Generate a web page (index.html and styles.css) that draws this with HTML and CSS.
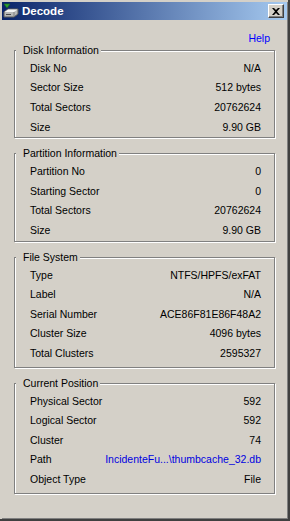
FILE: index.html
```html
<!DOCTYPE html>
<html lang="en">
<head>
    <meta charset="UTF-8">
    <title>Decode</title>
    <link rel="stylesheet" href="styles.css">
</head>
<body>
    <div class="window">
        <div class="frame">
            <div class="titlebar">
                <svg class="app-icon" width="16" height="16" viewBox="0 0 16 16">
                    <path d="M1 9 L5 6 H15 V11 L11 14 H1 Z" fill="#b8b8b8" stroke="#5a5a5a" stroke-width="1"/>
                    <path d="M1.5 9 L5 6.5 H14.5 L11 9 Z" fill="#f4f4f4"/>
                    <path d="M11 9 V13.5" stroke="#808080" stroke-width="1"/>
                    <rect x="3" y="11" width="5" height="1" fill="#4a4a4a"/>
                    <path d="M1 1 L7 1 L4 5 Z" fill="#2fa32f" stroke="#1d6b1d" stroke-width="0.6"/>
                </svg>
                <span class="title">Decode</span>
                <button class="close">
                    <svg width="8" height="7" viewBox="0 0 8 7">
                        <path d="M0 0 H2 L4 2 L6 0 H8 L5 3.5 L8 7 H6 L4 5 L2 7 H0 L3 3.5 Z" fill="#000"/>
                    </svg>
                </button>
            </div>

            <div class="content">
                <div class="help"><a href="#">Help</a></div>

                <fieldset class="group">
                    <legend>Disk Information</legend>
                    <div class="row"><span>Disk No</span><span>N/A</span></div>
                    <div class="row"><span>Sector Size</span><span>512 bytes</span></div>
                    <div class="row"><span>Total Sectors</span><span>20762624</span></div>
                    <div class="row"><span>Size</span><span>9.90 GB</span></div>
                </fieldset>

                <fieldset class="group">
                    <legend>Partition Information</legend>
                    <div class="row"><span>Partition No</span><span>0</span></div>
                    <div class="row"><span>Starting Sector</span><span>0</span></div>
                    <div class="row"><span>Total Sectors</span><span>20762624</span></div>
                    <div class="row"><span>Size</span><span>9.90 GB</span></div>
                </fieldset>

                <fieldset class="group loose">
                    <legend>File System</legend>
                    <div class="row"><span>Type</span><span>NTFS/HPFS/exFAT</span></div>
                    <div class="row"><span>Label</span><span>N/A</span></div>
                    <div class="row"><span>Serial Number</span><span>ACE86F81E86F48A2</span></div>
                    <div class="row"><span>Cluster Size</span><span>4096 bytes</span></div>
                    <div class="row"><span>Total Clusters</span><span>2595327</span></div>
                </fieldset>

                <fieldset class="group loose">
                    <legend>Current Position</legend>
                    <div class="row"><span>Physical Sector</span><span>592</span></div>
                    <div class="row"><span>Logical Sector</span><span>592</span></div>
                    <div class="row"><span>Cluster</span><span>74</span></div>
                    <div class="row"><span>Path</span><a class="path" href="#">IncidenteFu...\thumbcache_32.db</a></div>
                    <div class="row"><span>Object Type</span><span>File</span></div>
                </fieldset>
            </div>
        </div>
    </div>
</body>
</html>
```

FILE: styles.css
```css
html, body {
    margin: 0;
    padding: 0;
}
body {
    background-color: #d4d0c8;
    font-family: "Liberation Sans", Arial, sans-serif;
    font-size: 10.5px;
    color: #000;
}
.window {
    width: 290px;
    height: 521px;
    box-sizing: border-box;
    padding: 2px 0 0 2px;
    border-right: 2px solid #404040;
    border-bottom: 2px solid #404040;
}
.frame {
    height: 100%;
    box-sizing: border-box;
    border-right: 1px solid #808080;
    border-bottom: 1px solid #808080;
}
.titlebar {
    display: flex;
    align-items: center;
    height: 18px;
    padding: 0 3px 0 1px;
    background: linear-gradient(to right, #0a246a, #a6caf0);
}
.app-icon {
    display: block;
    margin-right: 3px;
}
.title {
    flex-grow: 1;
    color: #fff;
    font-weight: bold;
    font-size: 11.5px;
}
.close {
    display: flex;
    align-items: center;
    justify-content: center;
    width: 16px;
    height: 14px;
    box-sizing: border-box;
    padding: 0;
    background-color: #d4d0c8;
    border-top: 1px solid #fff;
    border-left: 1px solid #fff;
    border-right: 1px solid #404040;
    border-bottom: 1px solid #404040;
    box-shadow: inset -1px -1px 0 #808080;
}
.close svg {
    display: block;
}
.content {
    padding: 13px 12px 0;
}
.help {
    text-align: right;
    line-height: 11px;
    padding-right: 5px;
}
a {
    color: #0000ff;
    text-decoration: none;
}
.group {
    margin: 9px 0 0;
    padding: 1px 0 1px;
    min-width: 0;
    border: 1px solid #808080;
    box-shadow: 1px 1px 0 #fff, inset 1px 1px 0 #fff;
}
.group:first-of-type {
    margin-top: 0;
}
.group.loose {
    padding-bottom: 4px;
}
.group legend {
    margin-left: 1px;
    padding: 0 2px 0 7px;
    line-height: 13px;
    background-color: #d4d0c8;
}
.row {
    display: flex;
    justify-content: space-between;
    align-items: center;
    height: 19.6px;
    padding: 0 13px 0 15px;
}
.path {
    color: #0000e0;
}
```
